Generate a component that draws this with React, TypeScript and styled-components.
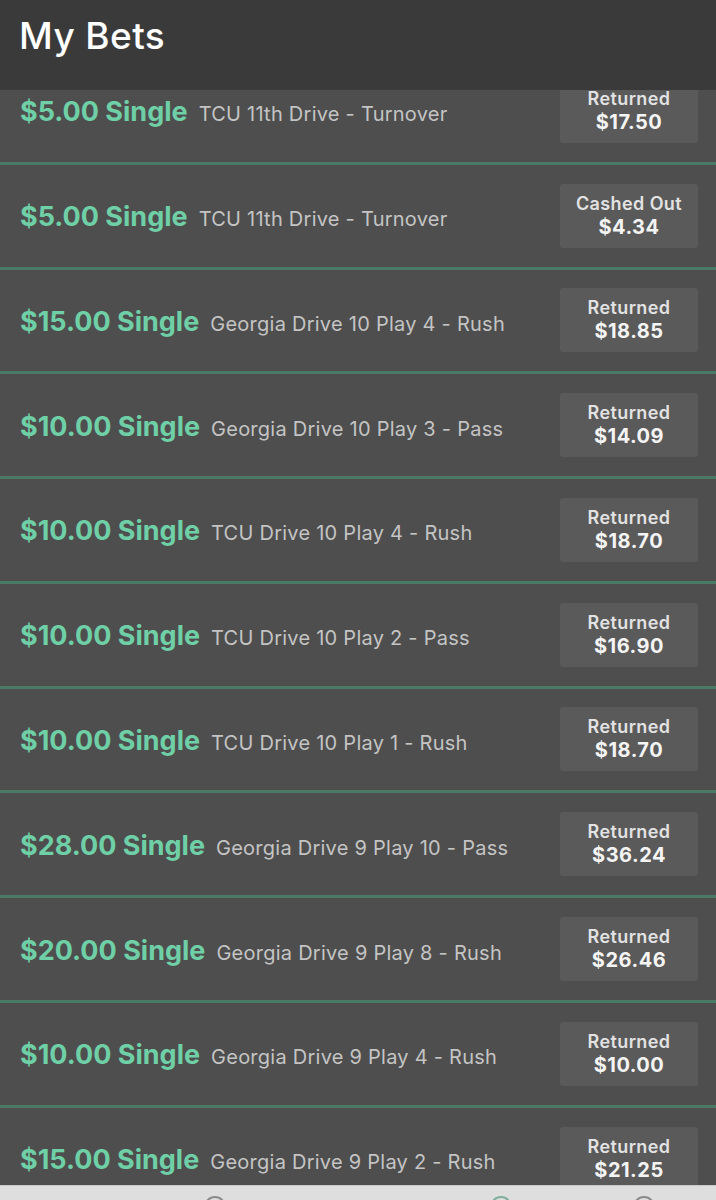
import React from "react";
import styled, { createGlobalStyle } from "styled-components";

const Global = createGlobalStyle`
  html, body { margin: 0; padding: 0; background: #4e4e4e; }
  body { font-family: Inter, "Noto Sans", "Liberation Sans", sans-serif; -webkit-font-smoothing: antialiased; }
`;

const Page = styled.div`
  height: 1200px;
  display: flex;
  flex-direction: column;
  overflow: hidden;
  background: #4e4e4e;
`;

const Header = styled.header`
  height: 90px;
  flex: 0 0 90px;
  background: #3a3a3a;
  display: flex;
  align-items: flex-start;
  padding: 12px 0 0 19px;
  box-sizing: border-box;
  position: relative;
  z-index: 1;
`;

const Title = styled.h1`
  margin: 0;
  color: #ffffff;
  font-size: 37px;
  font-weight: 500;
  letter-spacing: 0.4px;
  line-height: 48px;
`;

const Viewport = styled.main`
  flex: 1 1 auto;
  overflow: hidden;
`;

const List = styled.div`
  margin-top: -30px;
  display: flex;
  flex-direction: column;
`;

const Row = styled.div`
  height: 101.78px;
  flex: 0 0 auto;
  display: flex;
  align-items: center;
  justify-content: space-between;
  padding: 0 18px 0 20px;
  background: #4e4e4e;
  border-bottom: 3px solid #4a7a66;
`;

const Left = styled.div`
  display: flex;
  align-items: baseline;
  gap: 11px;
  white-space: nowrap;
  padding-top: 2px;
`;

const Stake = styled.span`
  color: #6fcfa6;
  font-size: 27px;
  font-weight: 700;
  letter-spacing: 0;
`;

const Desc = styled.span`
  color: #c4c4c4;
  font-size: 20px;
  font-weight: 400;
  letter-spacing: 0.25px;
`;

const Status = styled.div`
  width: 138px;
  height: 64px;
  box-sizing: border-box;
  background: #5a5a5a;
  border-radius: 3px;
  display: flex;
  flex-direction: column;
  align-items: center;
  justify-content: center;
  gap: 1px;
`;

const StatusLabel = styled.span`
  color: #e2e2e2;
  font-size: 18px;
  font-weight: 600;
  line-height: 22px;
  letter-spacing: 0.4px;
`;

const StatusAmount = styled.span`
  color: #f4f4f4;
  font-size: 20px;
  font-weight: 700;
  line-height: 23px;
  letter-spacing: 0.5px;
`;

const TabBar = styled.nav`
  height: 14px;
  flex: 0 0 14px;
  background: #dedede;
  border-top: 1px solid #c9c9c9;
  display: grid;
  grid-template-columns: repeat(5, 1fr);
  overflow: hidden;
`;

const Tab = styled.div`
  display: flex;
  justify-content: center;
  padding-top: 10px;
`;

const TabDot = styled.span<{ $tone: string }>`
  width: 22px;
  height: 22px;
  border-radius: 50%;
  border: 2px solid ${(p) => p.$tone};
  box-sizing: border-box;
`;

type Bet = { stake: string; desc: string; label: string; amount: string };

const bets: Bet[] = [
  { stake: "$5.00 Single", desc: "TCU 11th Drive - Turnover", label: "Returned", amount: "$17.50" },
  { stake: "$5.00 Single", desc: "TCU 11th Drive - Turnover", label: "Cashed Out", amount: "$4.34" },
  { stake: "$15.00 Single", desc: "Georgia Drive 10 Play 4 - Rush", label: "Returned", amount: "$18.85" },
  { stake: "$10.00 Single", desc: "Georgia Drive 10 Play 3 - Pass", label: "Returned", amount: "$14.09" },
  { stake: "$10.00 Single", desc: "TCU Drive 10 Play 4 - Rush", label: "Returned", amount: "$18.70" },
  { stake: "$10.00 Single", desc: "TCU Drive 10 Play 2 - Pass", label: "Returned", amount: "$16.90" },
  { stake: "$10.00 Single", desc: "TCU Drive 10 Play 1 - Rush", label: "Returned", amount: "$18.70" },
  { stake: "$28.00 Single", desc: "Georgia Drive 9 Play 10 - Pass", label: "Returned", amount: "$36.24" },
  { stake: "$20.00 Single", desc: "Georgia Drive 9 Play 8 - Rush", label: "Returned", amount: "$26.46" },
  { stake: "$10.00 Single", desc: "Georgia Drive 9 Play 4 - Rush", label: "Returned", amount: "$10.00" },
  { stake: "$15.00 Single", desc: "Georgia Drive 9 Play 2 - Rush", label: "Returned", amount: "$21.25" },
];

const tabs: (string | null)[] = [null, "#8a8a8a", null, "#7fae9a", "#8a8a8a"];

export default function App() {
  return (
    <Page>
      <Global />
      <Header>
        <Title>My Bets</Title>
      </Header>
      <Viewport>
        <List>
          {bets.map((b, i) => (
            <Row key={i}>
              <Left>
                <Stake>{b.stake}</Stake>
                <Desc>{b.desc}</Desc>
              </Left>
              <Status>
                <StatusLabel>{b.label}</StatusLabel>
                <StatusAmount>{b.amount}</StatusAmount>
              </Status>
            </Row>
          ))}
        </List>
      </Viewport>
      <TabBar>
        {tabs.map((t, i) => (
          <Tab key={i}>{t && <TabDot $tone={t} />}</Tab>
        ))}
      </TabBar>
    </Page>
  );
}
